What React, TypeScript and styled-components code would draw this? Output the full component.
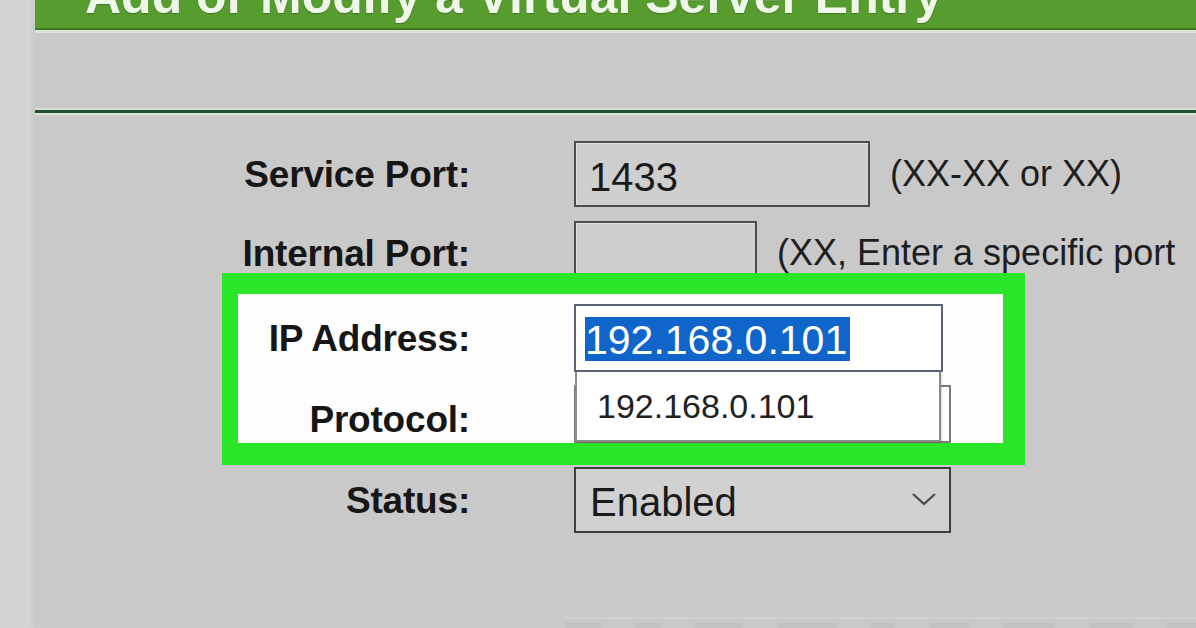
import styled, { createGlobalStyle } from 'styled-components'

const GlobalStyle = createGlobalStyle`
  html, body {
    margin: 0;
    padding: 0;
  }
  body {
    background: #d4d4d4;
    font-family: "Liberation Sans", Arial, sans-serif;
    overflow: hidden;
  }
`

const Page = styled.div`
  width: 1196px;
  height: 628px;
  overflow: hidden;
  display: flex;
  background: #d4d4d4;
`

const Panel = styled.main`
  flex: 1;
  margin-left: 35px;
  background: #c9c9c9;
  box-shadow: -3px 0 4px rgba(0, 0, 0, 0.05);
`

const Banner = styled.header`
  height: 28px;
  overflow: hidden;
  padding-left: 50px;
  background: #579c2e;
  border-bottom: 2px solid #3e7a26;
  box-shadow: 0 3px 0 #dbe3da;
`

const BannerTitle = styled.h1`
  margin: -29px 0 0;
  font-size: 50px;
  line-height: 1;
  font-weight: 700;
  color: #eef7e8;
  white-space: nowrap;
  text-shadow: 0 1px 1px rgba(0, 0, 0, 0.25);
`

const Rule = styled.hr`
  margin: 80px 0 0;
  border: 0;
  height: 3px;
  background: #21502f;
  box-shadow: 0 -2px 0 #d9e2d9, 0 2px 0 #d9e2d9;
`

const Form = styled.form`
  display: flex;
  flex-direction: column;
  margin: 0;
  padding-top: 28px;
`

const Row = styled.div<{ $height: number; $top?: number; $align?: string }>`
  flex: none;
  display: flex;
  align-items: ${({ $align }) => $align ?? 'center'};
  height: ${({ $height }) => $height}px;
  margin-top: ${({ $top }) => $top ?? 0}px;
`

const Label = styled.label<{ $width: number; $bottom?: number }>`
  flex: none;
  width: ${({ $width }) => $width}px;
  margin-right: 104px;
  padding-bottom: ${({ $bottom }) => $bottom ?? 0}px;
  text-align: right;
  font-size: 37px;
  line-height: 1;
  font-weight: 700;
  letter-spacing: -0.2px;
  color: #161616;
  white-space: nowrap;
`

const TextBox = styled.div<{ $width: number; $height: number }>`
  box-sizing: border-box;
  flex: none;
  width: ${({ $width }) => $width}px;
  height: ${({ $height }) => $height}px;
  display: flex;
  align-items: center;
  padding: 6px 0 0 13px;
  background: #cfcfcf;
  border: 2px solid #4c4c4c;
  box-shadow: inset 1px 1px 0 #e2e2e2;
  font-size: 40px;
  color: #1a1a1a;
`

const Hint = styled.span`
  margin-left: 20px;
  font-size: 36px;
  color: #1e1e1e;
  white-space: nowrap;
`

const Highlight = styled.section`
  box-sizing: border-box;
  flex: none;
  width: 803px;
  margin: -12px 0 0 187px;
  padding-top: 10px;
  background: #fdfdfd;
  border-style: solid;
  border-color: #2be52b;
  border-width: 21px 22px 22px 16px;
  position: relative;
  z-index: 1;
`

const FieldAnchor = styled.div`
  position: relative;
  flex: none;
`

const AddressInput = styled.div`
  box-sizing: border-box;
  width: 369px;
  height: 68px;
  display: flex;
  align-items: center;
  padding-left: 9px;
  background: #ffffff;
  border: 2px solid #5b6477;
`

const Selected = styled.span`
  display: inline-block;
  height: 44px;
  margin-top: 2px;
  padding-right: 3px;
  background: #0f65c9;
  color: #ffffff;
  font-size: 41px;
  line-height: 46px;
`

const Suggestions = styled.ul`
  box-sizing: border-box;
  position: absolute;
  top: 100%;
  left: 1px;
  z-index: 2;
  width: 366px;
  height: 70px;
  margin: 0;
  padding: 0 0 0 20px;
  list-style: none;
  display: flex;
  align-items: center;
  background: #ffffff;
  border: 2px solid #8a8a8a;
  border-top: 0;
  box-shadow: 1px 1px 2px rgba(0, 0, 0, 0.15);
  font-size: 34px;
  color: #222222;
`

const Select = styled.div<{ $height: number; $open?: boolean }>`
  box-sizing: border-box;
  flex: none;
  width: 377px;
  height: ${({ $height }) => $height}px;
  display: flex;
  align-items: center;
  justify-content: space-between;
  padding: 4px 12px 0 14px;
  background: ${({ $open }) => ($open ? '#ffffff' : '#d1d1d1')};
  border: 2px solid ${({ $open }) => ($open ? '#7a7a7a' : '#3e3e3e')};
  font-size: 40px;
  color: #1a1a1a;
`

const Chevron = styled.svg`
  width: 26px;
  height: 14px;
  margin-bottom: 6px;
`

const Ghosts = styled.div`
  flex: none;
  display: flex;
  gap: 34px;
  height: 11px;
  margin: 84px 0 0 530px;
  border-top: 2px solid #d0d0d0;
  padding-top: 4px;
`

const Ghost = styled.span<{ $width: number }>`
  width: ${({ $width }) => $width}px;
  height: 10px;
  background: #c2c2c2;
`

const ghostWidths = [36, 26, 48, 60, 24, 40, 52, 44, 60]

export default function App() {
  return (
    <>
      <GlobalStyle />
      <Page>
        <Panel>
          <Banner>
            <BannerTitle>Add or Modify a Virtual Server Entry</BannerTitle>
          </Banner>
          <Rule />
          <Form>
            <Row $height={66}>
              <Label $width={435}>Service Port:</Label>
              <TextBox $width={296} $height={66}>1433</TextBox>
              <Hint>(XX-XX or XX)</Hint>
            </Row>
            <Row $height={64} $top={14}>
              <Label $width={435}>Internal Port:</Label>
              <TextBox $width={183} $height={64} />
              <Hint>(XX, Enter a specific port</Hint>
            </Row>
            <Highlight>
              <Row $height={68}>
                <Label $width={232}>IP Address:</Label>
                <FieldAnchor>
                  <AddressInput>
                    <Selected>192.168.0.101</Selected>
                  </AddressInput>
                  <Suggestions>
                    <li>192.168.0.101</li>
                  </Suggestions>
                </FieldAnchor>
              </Row>
              <Row $height={71} $align="flex-end">
                <Label $width={232} $bottom={5}>
                  Protocol:
                </Label>
                <Select $height={58} $open />
              </Row>
            </Highlight>
            <Row $height={66} $top={2}>
              <Label $width={435}>Status:</Label>
              <Select $height={66}>
                <span>Enabled</span>
                <Chevron viewBox="0 0 26 14" fill="none">
                  <path d="M2 2 L13 12 L24 2" stroke="#4a4a4a" strokeWidth="2.2" />
                </Chevron>
              </Select>
            </Row>
            <Ghosts>
              {ghostWidths.map((w, i) => (
                <Ghost key={i} $width={w} />
              ))}
            </Ghosts>
          </Form>
        </Panel>
      </Page>
    </>
  )
}
